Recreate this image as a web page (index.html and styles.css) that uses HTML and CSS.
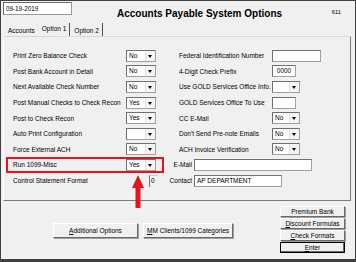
FILE: index.html
```html
<!DOCTYPE html>
<html lang="en">

<head>
    <meta charset="UTF-8">
    <title>Accounts Payable System Options</title>
    <link rel="stylesheet" href="styles.css">
</head>

<body>
    <div class="window">
        <div class="top-bar">
            <div class="date-box">09-19-2019</div>
            <div class="title">Accounts Payable System Options</div>
            <div class="screen-no">611</div>
        </div>
        <div class="tabs">
            <div class="tab">Accounts</div>
            <div class="tab selected">Option 1</div>
            <div class="tab">Option 2</div>
        </div>
        <div class="panel">
            <div class="col">
                <div class="row"><span class="lbl">Print Zero Balance Check</span><div class="combo"><span class="val">No</span><span class="drop"></span></div></div>
                <div class="row"><span class="lbl">Post Bank Account in Detail</span><div class="combo"><span class="val">No</span><span class="drop"></span></div></div>
                <div class="row"><span class="lbl">Next Available Check Number</span><div class="combo"><span class="val">No</span><span class="drop"></span></div></div>
                <div class="row"><span class="lbl">Post Manual Checks to Check Recon</span><div class="combo"><span class="val">Yes</span><span class="drop"></span></div></div>
                <div class="row"><span class="lbl">Post to Check Recon</span><div class="combo"><span class="val">Yes</span><span class="drop"></span></div></div>
                <div class="row"><span class="lbl">Auto Print Configuration</span><div class="combo"><span class="val"></span><span class="drop"></span></div></div>
                <div class="row"><span class="lbl">Force External ACH</span><div class="combo"><span class="val">No</span><span class="drop"></span></div></div>
                <div class="row marked"><span class="lbl">Run 1099-Misc</span><div class="combo"><span class="val">Yes</span><span class="drop"></span></div><span class="highlight"></span></div>
                <div class="row"><span class="lbl">Control Statement Format</span><div class="tiny-field">0</div></div>
            </div>
            <div class="col right">
                <div class="row"><span class="lbl">Federal Identification Number</span><div class="field w49"></div></div>
                <div class="row"><span class="lbl">4-Digit Check Prefix</span><div class="field w24 center">0000</div></div>
                <div class="row"><span class="lbl">Use GOLD Services Office Info.</span><div class="combo short"><span class="val"></span><span class="drop"></span></div></div>
                <div class="row"><span class="lbl">GOLD Services Office To Use</span><div class="field w24"></div></div>
                <div class="row"><span class="lbl">CC E-Mail</span><div class="combo short"><span class="val">No</span><span class="drop"></span></div></div>
                <div class="row"><span class="lbl">Don't Send Pre-note Emails</span><div class="combo short"><span class="val">No</span><span class="drop"></span></div></div>
                <div class="row"><span class="lbl">ACH Invoice Verification</span><div class="combo short"><span class="val">No</span><span class="drop"></span></div></div>
                <div class="row"><span class="lbl small">E-Mail</span><div class="field w118"></div></div>
                <div class="row"><span class="lbl small">Contact</span><div class="field w88">AP DEPARTMENT</div></div>
            </div>
        </div>
        <div class="bottom">
            <div class="left-buttons">
                <div class="btn wide"><u>A</u>dditional Options</div>
                <div class="btn wide"><u>M</u>M Clients/1099 Categories</div>
            </div>
            <div class="right-buttons">
                <div class="btn">Premium Bank</div>
                <div class="btn"><u>D</u>iscount Formulas</div>
                <div class="btn"><u>C</u>heck Formats</div>
                <div class="btn default"><u>E</u>nter</div>
            </div>
        </div>
        <svg class="arrow" width="12" height="33" viewBox="0 0 12 33">
            <polygon points="6,0 12,13 8.5,13 8.5,33 3.5,33 3.5,13 0,13" fill="#e3141f"/>
        </svg>
    </div>
</body>

</html>
```

FILE: styles.css
```css
body {
    margin: 0;
    background-color: #f0f0f0;
}

.window {
    position: relative;
    width: 356px;
    height: 262px;
    box-sizing: border-box;
    border: 1px solid #404040;
    border-bottom-width: 3px;
    background-color: #f0f0f0;
    font-family: "Liberation Sans", Arial, sans-serif;
    font-size: 6.5px;
    color: #000;
}

.top-bar {
    display: flex;
    align-items: flex-start;
    height: 22px;
    padding: 1px 0 0 2px;
    box-sizing: border-box;
}

.date-box {
    width: 69px;
    height: 13px;
    box-sizing: border-box;
    background-color: #fff;
    border: 1px solid #9a9a9a;
    border-top-color: #6a6a6a;
    border-left-color: #6a6a6a;
    padding: 1px 0 0 2px;
    line-height: 9px;
    font-size: 6.3px;
}

.title {
    margin-left: 45px;
    margin-top: 6px;
    font-size: 10px;
    font-weight: bold;
    line-height: 12px;
}

.screen-no {
    margin-left: auto;
    margin-right: 14px;
    margin-top: 7px;
    font-size: 5.8px;
}

.tabs {
    display: flex;
    height: 13px;
    padding-left: 6px;
}

.tab {
    padding: 3px 3px 0 1px;
    margin-right: 3px;
    line-height: 9px;
}

.tab.selected {
    padding-top: 1px;
    border-right: 1px solid #505050;
    margin-right: 3px;
}

.tab.selected + .tab {
    border-right: 1px solid #505050;
}

.panel {
    display: flex;
    height: 165px;
    margin: 0 4px 0 2px;
    padding: 11px 0 0 9px;
    box-sizing: border-box;
    border-top: 1px solid #d8d8d8;
    border-right: 1px solid #7a7a7a;
    border-bottom: 1px solid #7a7a7a;
    border-left: 1px solid #ffffff;
}

.col {
    width: 166px;
}

.row {
    position: relative;
    display: flex;
    align-items: center;
    height: 15.6px;
}

.lbl {
    width: 113px;
    white-space: nowrap;
}

.right .lbl {
    width: 93px;
}

.right .lbl.small {
    width: 26px;
    margin-left: -11px;
    padding-right: 2px;
    box-sizing: border-box;
    text-align: right;
}

.combo {
    display: flex;
    width: 30px;
    height: 12px;
    box-sizing: border-box;
    background-color: #fff;
    border: 1px solid #a0a0a0;
    border-top-color: #707070;
    border-left-color: #707070;
}

.combo.short {
    width: 28px;
}

.val {
    flex: 1;
    padding-left: 2px;
    line-height: 10px;
}

.drop {
    position: relative;
    width: 9px;
    background-color: #f4f4f4;
    border-left: 1px solid #e0e0e0;
}

.drop::after {
    content: "";
    position: absolute;
    left: 2px;
    top: 4px;
    border-left: 2.5px solid transparent;
    border-right: 2.5px solid transparent;
    border-top: 3px solid #000;
}

.field {
    height: 12px;
    box-sizing: border-box;
    background-color: #fff;
    border: 1px solid #a0a0a0;
    border-top-color: #707070;
    border-left-color: #707070;
    padding-left: 2px;
    line-height: 10px;
}

.field.center {
    text-align: center;
    padding-left: 0;
}

.w24 { width: 24px; }
.w49 { width: 49px; }
.w88 { width: 88px; }
.w118 { width: 118px; }

.tiny-field {
    margin-left: 23px;
    width: 9px;
    height: 12px;
    box-sizing: border-box;
    border-left: 1px solid #707070;
    border-top: 1px solid #d0d0d0;
    padding-left: 1px;
    line-height: 10px;
}

.highlight {
    position: absolute;
    left: -7px;
    top: 0;
    width: 158px;
    height: 16px;
    box-sizing: border-box;
    border: 2px solid #e3141f;
}

.bottom {
    display: flex;
    height: 57px;
}

.left-buttons {
    display: flex;
    align-items: center;
    gap: 5px;
    padding-left: 52px;
    padding-top: 2px;
}

.right-buttons {
    display: flex;
    flex-direction: column;
    gap: 1px;
    margin-left: auto;
    margin-right: 10px;
    padding-top: 5px;
}

.btn {
    width: 65px;
    height: 11px;
    box-sizing: border-box;
    background-color: #f0f0f0;
    border: 1px solid #6a6a6a;
    border-top-color: #ffffff;
    border-left-color: #ffffff;
    box-shadow: 1px 1px 0 #a0a0a0;
    text-align: center;
    line-height: 9px;
}

.btn.wide {
    width: auto;
    height: 15px;
    line-height: 13px;
}

.left-buttons .btn:first-child {
    width: 85px;
}

.left-buttons .btn:last-child {
    width: 90px;
}

.btn.default {
    border: 1px solid #000;
    box-shadow: inset -1px -1px 0 #6a6a6a;
}

.arrow {
    position: absolute;
    left: 131px;
    top: 174px;
}
```
